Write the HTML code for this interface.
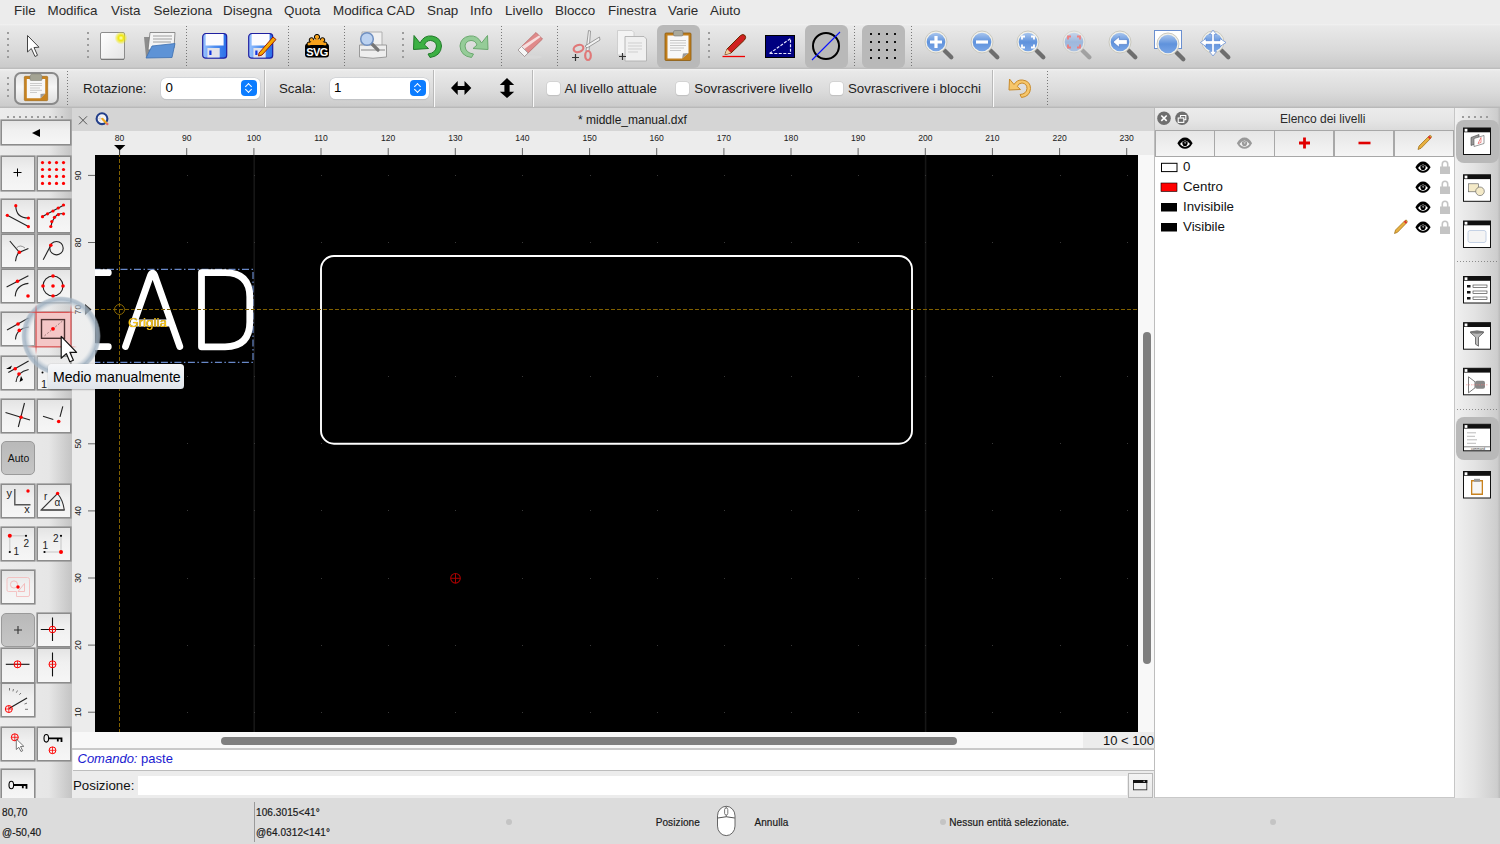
<!DOCTYPE html>
<html><head><meta charset="utf-8">
<style>
*{margin:0;padding:0;box-sizing:border-box}
html,body{width:1500px;height:844px;overflow:hidden;background:#ececec;font-family:"Liberation Sans",sans-serif;color:#1e1e1e}
.a{position:absolute}
#menubar{left:0;top:0;width:1500px;height:24px;background:#ececec}
#menubar span{position:absolute;top:3px;font-size:13.4px;color:#2b2b2b;white-space:nowrap}
#tb1{left:0;top:24px;width:1500px;height:45px;background:linear-gradient(#f2f2f2 0,#e9e9e9 2px,#d9d9d9 60%,#cbcbcb 95%,#b9b9b9 100%)}
#tb2{left:0;top:69px;width:1500px;height:39px;background:linear-gradient(#f2f2f2 0,#e9e9e9 2px,#dadada 60%,#cccccc 94%,#b4b4b4 100%)}
.dsep{position:absolute;width:1px;background-image:linear-gradient(#555 50%,transparent 50%);background-size:1px 3px;opacity:.75}
.hdl{position:absolute;width:2px;background-image:linear-gradient(#9c9c9c 2px,transparent 2px);background-size:2px 6px}
.vsep{position:absolute;width:1px;background:#fafafa;border-left:1px solid #b9b9b9;width:2px}
#leftbox{left:0;top:108px;width:72px;height:690px;background:linear-gradient(90deg,#ececec 0,#e6e6e6 68%,#cbcbcb 93%,#c4c4c4 100%)}
.btn svg{position:absolute;left:0;top:0}
#tabhdr{left:72px;top:108px;width:1083px;height:23px;background:#d5d5d5}
#ruler{left:72px;top:131px;width:1083px;height:24px;background:#ececec}
#vruler{left:72px;top:155px;width:23px;height:577px;background:#ececec}
#canvas{left:95px;top:155px;width:1043px;height:577px;background:#000;overflow:hidden}
#vscroll{left:1138px;top:155px;width:17px;height:593px;background:#f8f8f8}
#hscroll{left:72px;top:732px;width:1066px;height:16px;background:#f8f8f8}
#cmd{left:72px;top:748px;width:1083px;height:50px;background:#ececec}
#status{left:0;top:798px;width:1500px;height:46px;background:#dcdcdc}
#status span{position:absolute;font-size:10px;color:#222;white-space:nowrap;letter-spacing:.1px}
#layer{left:1155px;top:108px;width:299px;height:690px;background:#fff;border-bottom:1px solid #c9c9c9}
#rdock{left:1454px;top:108px;width:46px;height:690px;background:linear-gradient(90deg,#c6c6c6 0,#c6c6c6 1px,#f0f0f0 1px,#e3e3e3 45%,#cdcdcd 94%,#bababa 100%)}
.tl{font-size:13.3px;color:#1e1e1e;white-space:nowrap}
.spin{position:absolute;top:77.5px;width:98.5px;height:21px;background:#fff;border-radius:5.5px;box-shadow:0 0 0 .6px #c6cad0,0 .5px 1px rgba(0,0,0,.12)}
.spin span{position:absolute;left:4.5px;top:2.5px;font-size:13.3px;color:#000}
.spin i{position:absolute;right:2.3px;top:2.5px;width:16px;height:16px;border-radius:4px;background:#0b7cff}
.spin i:before,.spin i:after{content:"";position:absolute;left:5px;width:4px;height:4px;border:solid #fff;border-width:1.3px 0 0 1.3px}
.spin i:before{top:4px;transform:rotate(45deg)}
.spin i:after{top:7px;transform:rotate(225deg)}
.chk{position:absolute;top:81.5px;width:13px;height:13px;background:#fff;border-radius:3px;box-shadow:0 0 0 .5px #c9c9c9,0 .5px 1px rgba(0,0,0,.15)}
.btn{position:absolute;background:linear-gradient(#e4e4e4,#f0f0f0 40%,#f6f6f6);border:1px solid #8c8c8c;box-shadow:0 0 0 .6px #8c8c8c}
.btnp{position:absolute;background:linear-gradient(#b9b9b9,#c6c6c6);border:1px solid #9a9a9a}
.hdl2{position:absolute;background-image:linear-gradient(90deg,#9c9c9c 2px,transparent 2px);background-size:6px 2px}
#status span,.st{position:absolute;font-size:10px;color:#1a1a1a;white-space:nowrap;letter-spacing:.1px;-webkit-text-stroke:.2px #1a1a1a}
.lb{position:absolute;top:131px;height:24.5px;background:linear-gradient(#e6e6e6,#f5f5f5)}
.ln{position:absolute;left:1183px;font-size:13.3px;color:#111;white-space:nowrap}
.dsep2{position:absolute;height:1px;background-image:linear-gradient(90deg,#666 50%,transparent 50%);background-size:3px 1px;opacity:.7}
</style></head><body>
<div id="menubar" class="a">
<span style="left:14px">File</span>
<span style="left:47.5px">Modifica</span>
<span style="left:111px">Vista</span>
<span style="left:153.5px">Seleziona</span>
<span style="left:223px">Disegna</span>
<span style="left:284px">Quota</span>
<span style="left:333px">Modifica CAD</span>
<span style="left:427px">Snap</span>
<span style="left:470px">Info</span>
<span style="left:505px">Livello</span>
<span style="left:555px">Blocco</span>
<span style="left:608px">Finestra</span>
<span style="left:668px">Varie</span>
<span style="left:710px">Aiuto</span>
</div>
<div id="tb1" class="a"></div>
<div id="tb2" class="a"></div>
<!-- toolbar1 -->
<div class="hdl" style="left:7px;top:32px;height:26px"></div>
<div class="hdl" style="left:87px;top:32px;height:26px"></div>
<div class="hdl" style="left:402px;top:32px;height:26px"></div>
<div class="hdl" style="left:708px;top:32px;height:26px"></div>
<div class="dsep" style="left:186px;top:26px;height:41px"></div>
<div class="dsep" style="left:288px;top:26px;height:41px"></div>
<div class="dsep" style="left:344px;top:26px;height:41px"></div>
<div class="dsep" style="left:501px;top:26px;height:41px"></div>
<div class="dsep" style="left:557px;top:26px;height:41px"></div>
<div class="dsep" style="left:854px;top:26px;height:41px"></div>
<div class="dsep" style="left:911px;top:26px;height:41px"></div>
<div class="a" style="left:657px;top:25px;width:43px;height:43px;background:#b9b9b9;border-radius:6px"></div>
<div class="a" style="left:805px;top:25px;width:43px;height:43px;background:#b9b9b9;border-radius:6px"></div>
<div class="a" style="left:862px;top:25px;width:43px;height:43px;background:#b9b9b9;border-radius:6px"></div>
<svg class="a" style="left:0;top:24px" width="1500" height="45" viewBox="0 24 1500 45">
<defs>
<linearGradient id="gpage" x1="0" y1="0" x2="1" y2="1"><stop offset="0" stop-color="#ffffff"/><stop offset="1" stop-color="#e4e4e4"/></linearGradient>
<linearGradient id="gblue" x1="0" y1="0" x2="1" y2="0"><stop offset="0" stop-color="#9ac4ff"/><stop offset=".5" stop-color="#4f8ef0"/><stop offset="1" stop-color="#2a6ee8"/></linearGradient>
<radialGradient id="gglow"><stop offset="0" stop-color="#ffffc0"/><stop offset=".4" stop-color="#f0e810"/><stop offset="1" stop-color="#f0e810" stop-opacity="0"/></radialGradient>
<linearGradient id="glens" x1="0" y1="0" x2="0" y2="1"><stop offset="0" stop-color="#a9c6ee"/><stop offset=".5" stop-color="#5f92dc"/><stop offset="1" stop-color="#7aa6e6"/></linearGradient>
<g id="lens">
<path d="M8.5 8.5 L15.3 15.3" stroke="#6e6e6e" stroke-width="4.3" stroke-linecap="round"/>
<circle cx="0" cy="0" r="11" fill="#f2f1ea" stroke="#c9c8bf" stroke-width="1"/>
<circle cx="0" cy="0" r="9.3" fill="url(#glens)"/>
</g>
</defs>
<!-- pointer -->
<path d="M27.5 35.5 L27.5 52 L31.3 48.5 L35 56.5 L37.5 55.3 L34 47.5 L39 47.2 Z" fill="#fff" stroke="#444" stroke-width="1" stroke-linejoin="round"/>
<!-- new doc -->
<rect x="100.5" y="32.5" width="24" height="27" rx="1.5" fill="url(#gpage)" stroke="#8c8c8c"/>
<line x1="101" y1="59.3" x2="124" y2="59.3" stroke="#777" stroke-width="1.2"/>
<circle cx="121" cy="38" r="6.5" fill="url(#gglow)"/>
<!-- open folder -->
<path d="M144 37 L152 37 L151 56 L146 57 Z" fill="#8c8c8c"/>
<path d="M150 32.5 L175 32.5 L174 48 L148 50 Z" fill="#f4f4f4" stroke="#777" stroke-width=".8"/>
<path d="M153 36 L172 36 M153 39 L172 39 M153 42 L171 42" stroke="#bbb" stroke-width="1.5"/>
<path d="M152 46 L175 43.5 L172 57.5 L146 58 Z" fill="#5e93d6" stroke="#3c6fb0" stroke-width=".8"/>
<!-- save -->
<g transform="translate(202,33)">
<rect x=".7" y=".7" width="24" height="24.5" rx="3" fill="url(#gblue)" stroke="#1e1ea0" stroke-width="1.2"/>
<rect x="3.6" y="1" width="18" height="11.5" fill="#fbfbff"/>
<rect x="5.4" y="15" width="12.3" height="9.5" fill="#e2e2ea"/>
<rect x="7.3" y="17.5" width="2.2" height="4.5" fill="#1034e0"/>
</g>
<!-- save as -->
<g transform="translate(248,33)">
<rect x=".7" y=".7" width="24" height="24.5" rx="3" fill="url(#gblue)" stroke="#1e1ea0" stroke-width="1.2"/>
<rect x="3.6" y="1" width="18" height="11.5" fill="#fbfbff"/>
<rect x="5.4" y="15" width="12.3" height="9.5" fill="#e2e2ea"/>
<rect x="7.3" y="17.5" width="2.2" height="4.5" fill="#1034e0"/>
<path d="M11 20 L25 4 L28 6.5 L14 22 L10.5 23 Z" fill="#f7a800" stroke="#a02000" stroke-width="1"/>
</g>
<!-- svg logo -->
<rect x="305" y="43.5" width="24" height="14" rx="3" fill="#000"/>
<g fill="#f7a21b" stroke="#000" stroke-width="1">
<circle cx="317" cy="37" r="2.6"/><circle cx="311.5" cy="40" r="2.3"/><circle cx="322.5" cy="40" r="2.3"/><circle cx="309" cy="44" r="2"/><circle cx="325" cy="44" r="2"/>
</g>
<path d="M308 45 Q317 33 326 45 Z" fill="#f7a21b"/>
<text x="317" y="55.5" font-family="Liberation Sans" font-weight="bold" font-size="11" fill="#fff" text-anchor="middle" letter-spacing="-.5">SVG</text>
<!-- print preview -->
<path d="M362 32 L382 32 L382 47 L362 47 Z" fill="#f0f0f0" stroke="#b0b0b0"/>
<path d="M359.5 45 L386.5 45 L386.5 57 Q373 59.5 359.5 57 Z" fill="#eeeeee" stroke="#9a9a9a"/>
<path d="M361 50 L385 50" stroke="#888" stroke-width="1"/>
<path d="M370 42 L378 50" stroke="#777" stroke-width="3.2" stroke-linecap="round"/>
<circle cx="367" cy="39" r="6.3" fill="#bcd2f0" stroke="#6f8fc0" stroke-width="1.5"/>
<!-- undo -->
<path d="M420 43 Q424 35 432 36 Q441 37.5 441.5 46 Q441 56 430 57.5 L428 54 Q436 53 436.5 46 Q436 41 430.5 40.5 Q426 40.5 424.5 45 L428.5 48.5 L413.5 49.5 L414 35.5 Z" fill="#3cb043" stroke="#1f7a28" stroke-width="1"/>
<!-- redo -->
<path d="M481.5 43 Q477.5 35 469.5 36 Q460.5 37.5 460 46 Q460.5 56 471.5 57.5 L473.5 54 Q465.5 53 465 46 Q465.5 41 471 40.5 Q475.5 40.5 477 45 L473 48.5 L488 49.5 L487.5 35.5 Z" fill="#95cc98" stroke="#6aa86e" stroke-width="1"/>
<!-- eraser -->
<ellipse cx="531" cy="57" rx="11" ry="1.8" fill="#d8d8d8"/>
<path d="M518 50 L536 32.5 L542.5 39 L524.5 56.5 Z" fill="#e08a8a" stroke="#b86a6a" stroke-width=".8"/>
<path d="M521 47 L539 35.5 L540.5 37 L523 50 Z" fill="#f6dede"/>
<path d="M518 50 L521.5 46.5 L528 53 L524.5 56.5 Z" fill="#f6f6f6" stroke="#999" stroke-width=".8"/>
<!-- scissors -->
<path d="M588.5 30.5 L586 51 L589 51 L590.5 31 Z" fill="#f2f2f2" stroke="#888" stroke-width=".8"/>
<path d="M599.5 37 L585 46 L587 48 L600 40 Z" fill="#f2f2f2" stroke="#888" stroke-width=".8"/>
<ellipse cx="578.5" cy="48.5" rx="5" ry="3.5" fill="none" stroke="#e07878" stroke-width="2.2" transform="rotate(-20 578.5 48.5)"/>
<ellipse cx="588" cy="55.5" rx="2.8" ry="4.5" fill="none" stroke="#e07878" stroke-width="2.2"/>
<path d="M572 57.5 h7 M575.5 54 v7" stroke="#333" stroke-width="1.2"/>
<!-- copy -->
<path d="M617.5 30.5 L632 30.5 L634 32.5 L634 55 L617.5 55 Z" fill="#f4f4f4" stroke="#c8c8c8" stroke-width=".8"/>
<path d="M625 36.5 L644 36.5 L646.5 39 L646.5 61 L625 61 Z" fill="#f0f0f0" stroke="#b0b0b0" stroke-width=".9"/>
<path d="M628 43 h14 M628 46 h14 M628 49 h14 M628 52 h10" stroke="#cfcfcf" stroke-width="1"/>
<path d="M619 56.5 h7 M622.5 53 v7" stroke="#333" stroke-width="1.2"/>
<!-- paste -->
<rect x="665" y="33" width="26" height="27.5" rx="1" fill="#c27f1c" stroke="#8a5a10" stroke-width=".8"/>
<path d="M667.5 35.5 L688.5 35.5 L688.5 53 L682 58.5 L667.5 58.5 Z" fill="#f8f8f8"/>
<path d="M682 58.5 L688.5 53 L683 53.5 Z" fill="#999"/>
<path d="M670 40.5 h16 M670 43 h16 M670 45.5 h16 M670 48 h14 M670 50.5 h11" stroke="#c8c8c8" stroke-width="1"/>
<rect x="673.5" y="30.5" width="9.5" height="5.5" rx="1.5" fill="#a9a99c" stroke="#777" stroke-width=".6"/>
<!-- pencil -->
<line x1="722.5" y1="56.5" x2="745" y2="56.5" stroke="#f00000" stroke-width="1.3"/>
<path d="M725 54.5 L727 49 L740.5 35.5 Q743 33.5 745 35.5 Q746.5 37.5 744.5 40 L731 53 Z" fill="#d02020" stroke="#6a2a00" stroke-width="1"/>
<path d="M725 54.5 L727 49 L731 53 Z" fill="#f0d0a0"/>
<!-- blue rect -->
<rect x="765.5" y="35.5" width="29" height="22" fill="#000080" stroke="#000" stroke-width="1"/>
<path d="M769.5 53.5 L790.5 38.5 L790.5 53.5 Z" fill="none" stroke="#e8e8ff" stroke-width="1.2" stroke-dasharray="3 1.5"/>
<!-- circle -->
<circle cx="826" cy="46" r="13" fill="none" stroke="#000" stroke-width="2"/>
<line x1="812" y1="60" x2="840" y2="32" stroke="#0a10ff" stroke-width="1.1"/>
<!-- grid -->
<g fill="#111">
<rect x="870" y="33" width="2" height="2"/><rect x="878" y="33" width="2" height="2"/><rect x="886" y="33" width="2" height="2"/><rect x="894" y="33" width="2" height="2"/>
<rect x="870" y="41" width="2" height="2"/><rect x="878" y="41" width="2" height="2"/><rect x="886" y="41" width="2" height="2"/><rect x="894" y="41" width="2" height="2"/>
<rect x="870" y="49" width="2" height="2"/><rect x="878" y="49" width="2" height="2"/><rect x="886" y="49" width="2" height="2"/><rect x="894" y="49" width="2" height="2"/>
<rect x="870" y="57" width="2" height="2"/><rect x="878" y="57" width="2" height="2"/><rect x="886" y="57" width="2" height="2"/><rect x="894" y="57" width="2" height="2"/>
</g>
<!-- zoom icons -->
<use href="#lens" x="936" y="42"/>
<path d="M936 36 v12 M930 42 h12" stroke="#fff" stroke-width="3.2"/>
<use href="#lens" x="982" y="42"/>
<path d="M976 42 h12" stroke="#fff" stroke-width="3.2"/>
<use href="#lens" x="1028" y="42"/>
<path d="M1022 39.5 v-3 h3 M1031 36.5 h3 v3 M1034 44.5 v3 h-3 M1025 47.5 h-3 v-3" stroke="#fff" stroke-width="1.8" fill="none"/>
<g opacity=".5"><use href="#lens" x="1074" y="42"/>
<path d="M1068 39.5 v-3 h3 M1077 36.5 h3 v3 M1080 44.5 v3 h-3 M1071 47.5 h-3 v-3" stroke="#ff2020" stroke-width="1.8" fill="none"/></g>
<use href="#lens" x="1120" y="42"/>
<path d="M1113 42 L1119.3 36.6 V39.6 H1127.3 V44.4 H1119.3 V47.4 Z" fill="#fff" stroke="#3c6cc0" stroke-width=".6"/>
<rect x="1154.5" y="30.5" width="27" height="18" fill="#fff" stroke="#6a8fd0"/>
<use href="#lens" x="1168" y="44"/>
<use href="#lens" x="1213" y="42"/>
<path d="M1213 30.2 L1216.5 34.5 H1214.3 V40.7 H1220 V38.5 L1226 42.5 L1220 46.5 V44.3 H1214.3 V51.5 H1216.5 L1213 56 L1209.5 51.5 H1211.7 V44.3 H1206 V46.5 L1200.4 42.5 L1206 38.5 V40.7 H1211.7 V34.5 H1209.5 Z" fill="#fff" stroke="#4a7ad0" stroke-width=".6"/>
</svg>


<!-- toolbar2 -->
<div class="hdl" style="left:7px;top:77px;height:21px"></div>
<div class="a" style="left:14px;top:72px;width:45px;height:33px;border:2px solid #8a8a8a;border-radius:7px;background:linear-gradient(#e4e4e4,#f6f6f6 45%,#ececec 70%,#dedede)"></div>
<div class="dsep" style="left:67px;top:71px;height:34px"></div>
<span class="a tl" style="left:83px;top:81px">Rotazione:</span>
<div class="spin" style="left:161px"><span>0</span><i></i></div>
<div class="vsep" style="left:264px;top:70px;height:37px"></div>
<span class="a tl" style="left:279px;top:81px">Scala:</span>
<div class="spin" style="left:329.5px;width:99px"><span>1</span><i></i></div>
<div class="vsep" style="left:433px;top:70px;height:37px"></div>
<div class="vsep" style="left:532px;top:70px;height:37px"></div>
<div class="chk" style="left:546.5px"></div><span class="a tl" style="left:564.6px;top:81px">Al livello attuale</span>
<div class="chk" style="left:676px"></div><span class="a tl" style="left:694.3px;top:81px">Sovrascrivere livello</span>
<div class="chk" style="left:829.6px"></div><span class="a tl" style="left:848px;top:81px">Sovrascrivere i blocchi</span>
<div class="vsep" style="left:992px;top:70px;height:37px"></div>
<div class="dsep" style="left:1047px;top:71px;height:34px"></div>
<svg class="a" style="left:0;top:69px" width="1100" height="39" viewBox="0 69 1100 39">
<!-- paste icon -->
<rect x="24.3" y="76.3" width="23.4" height="24.4" rx="1" fill="#c8821e" stroke="#9a6414" stroke-width=".6"/>
<path d="M26.8 79 L45.2 79 L45.2 93.5 L40.5 98.3 L26.8 98.3 Z" fill="#f7f7f7"/>
<path d="M40.5 98.3 L45.2 93.5 L40.5 94 Z" fill="#999"/>
<path d="M30 83.5 h12 M30 85.5 h12 M30 88 h10 M30 90.3 h12 M30 92.5 h7" stroke="#c5c5c5" stroke-width=".9"/>
<path d="M31.5 73.8 L40.5 73.8 L42 76 L42 79.5 Q42 80.5 41 80.5 L31 80.5 Q30 80.5 30 79.5 L30 76 Z" fill="#a4a494" stroke="#7a7a70" stroke-width=".5"/>
<!-- h arrow -->
<path d="M451 88 L457.7 81 L457.7 85.9 L464.5 85.9 L464.5 81 L471.3 88 L464.5 95 L464.5 90.1 L457.7 90.1 L457.7 95 Z" fill="#000"/>
<!-- v arrow -->
<path d="M507 78 L514.2 85 L509.6 85 L509.6 91.7 L514.2 91.7 L507 98 L499.8 91.7 L504.4 91.7 L504.4 85 L499.8 85 Z" fill="#000"/>
<!-- orange undo -->
<path d="M1014 84.5 Q1017 79.5 1022.5 80 Q1030.5 81 1030.5 88.5 Q1030 96.5 1021.5 97.5 L1020 94.5 Q1026.5 94 1027 88.5 Q1027 83.5 1022 83 Q1018.5 83 1017.3 86.5 L1020.5 89.5 L1009 90 L1009.5 79 Z" fill="#f6c66a" stroke="#c88a2a" stroke-width="1"/>
</svg>
<div id="leftbox" class="a"></div>
<!--LEFT--><div class="hdl2" style="left:7px;top:116px;width:57px;height:2px"></div>
<div class="btn" style="left:1.3px;top:120.2px;width:69.3px;height:25.2px"></div>
<div class="btn" style="left:1.3px;top:156.4px;width:34.2px;height:34.2px"></div>
<div class="btn" style="left:36.5px;top:156.4px;width:34.2px;height:34.2px"></div>
<div class="btn" style="left:1.3px;top:199.3px;width:34.2px;height:34.2px"></div>
<div class="btn" style="left:36.5px;top:199.3px;width:34.2px;height:34.2px"></div>
<div class="btn" style="left:1.3px;top:234.3px;width:34.2px;height:34.2px"></div>
<div class="btn" style="left:36.5px;top:234.3px;width:34.2px;height:34.2px"></div>
<div class="btn" style="left:1.3px;top:269.0px;width:34.2px;height:34.2px"></div>
<div class="btn" style="left:36.5px;top:269.0px;width:34.2px;height:34.2px"></div>
<div class="btn" style="left:1.3px;top:312.3px;width:34.2px;height:34.2px"></div>
<div class="btn" style="left:36.5px;top:312.3px;width:34.2px;height:34.2px"></div>
<div class="btn" style="left:1.3px;top:355.7px;width:34.2px;height:34.2px"></div>
<div class="btn" style="left:36.5px;top:355.7px;width:34.2px;height:34.2px"></div>
<div class="btn" style="left:1.3px;top:398.5px;width:34.2px;height:34.2px"></div>
<div class="btn" style="left:36.5px;top:398.5px;width:34.2px;height:34.2px"></div>
<div class="btnp" style="left:1.3px;top:441.3px;width:34.2px;height:34.2px;border-radius:5px"></div>
<div class="btn" style="left:1.3px;top:484.2px;width:34.2px;height:34.2px"></div>
<div class="btn" style="left:36.5px;top:484.2px;width:34.2px;height:34.2px"></div>
<div class="btn" style="left:1.3px;top:527.3px;width:34.2px;height:34.2px"></div>
<div class="btn" style="left:36.5px;top:527.3px;width:34.2px;height:34.2px"></div>
<div class="btn" style="left:1.3px;top:570.2px;width:34.2px;height:34.2px"></div>
<div class="btnp" style="left:1.3px;top:613.3px;width:34.2px;height:34.2px;border-radius:5px"></div>
<div class="btn" style="left:36.5px;top:613.3px;width:34.2px;height:34.2px"></div>
<div class="btn" style="left:1.3px;top:648.4px;width:34.2px;height:34.2px"></div>
<div class="btn" style="left:36.5px;top:648.4px;width:34.2px;height:34.2px"></div>
<div class="btn" style="left:1.3px;top:682.6px;width:34.2px;height:34.2px"></div>
<div class="btn" style="left:1.3px;top:726.5px;width:34.2px;height:34.2px"></div>
<div class="btn" style="left:36.5px;top:726.5px;width:34.2px;height:34.2px"></div>
<div class="btn" style="left:1.3px;top:769.3px;width:34.2px;height:30px"></div>
<svg class="a" style="left:0;top:0" width="72" height="800"><path d="M32 133 L40 129 L40 137 Z" transform="translate(0,0)" fill="#000"/><path d="M13.5 172.5 h8 M17.5 168.5 v8" stroke="#000" stroke-width="1"/><circle cx="42.5" cy="162.6" r="1.6" fill="#ff0000"/><circle cx="42.5" cy="169.5" r="1.6" fill="#ff0000"/><circle cx="42.5" cy="176.4" r="1.6" fill="#ff0000"/><circle cx="42.5" cy="183.4" r="1.6" fill="#ff0000"/><circle cx="49.5" cy="162.6" r="1.6" fill="#ff0000"/><circle cx="49.5" cy="169.5" r="1.6" fill="#ff0000"/><circle cx="49.5" cy="176.4" r="1.6" fill="#ff0000"/><circle cx="49.5" cy="183.4" r="1.6" fill="#ff0000"/><circle cx="56.5" cy="162.6" r="1.6" fill="#ff0000"/><circle cx="56.5" cy="169.5" r="1.6" fill="#ff0000"/><circle cx="56.5" cy="176.4" r="1.6" fill="#ff0000"/><circle cx="56.5" cy="183.4" r="1.6" fill="#ff0000"/><circle cx="63.5" cy="162.6" r="1.6" fill="#ff0000"/><circle cx="63.5" cy="169.5" r="1.6" fill="#ff0000"/><circle cx="63.5" cy="176.4" r="1.6" fill="#ff0000"/><circle cx="63.5" cy="183.4" r="1.6" fill="#ff0000"/><path d="M7.3 215.3 L28.4 226.6" stroke="#222" stroke-width="1.1"/><path d="M15.8 205.7 Q16 218 28.4 218" stroke="#222" stroke-width="1.1" fill="none"/><circle cx="7.3" cy="215.3" r="1.6" fill="#ff0000"/><circle cx="15.8" cy="205.7" r="1.6" fill="#ff0000"/><circle cx="28.4" cy="218" r="1.6" fill="#ff0000"/><circle cx="28.4" cy="226.6" r="1.6" fill="#ff0000"/><path d="M42.5 216.5 L64 205 M51 226.5 Q52 219 58 214 L64 213.5" stroke="#222" stroke-width="1.1" fill="none"/><circle cx="42.5" cy="216.7" r="1.6" fill="#ff0000"/><circle cx="47.5" cy="213.8" r="1.6" fill="#ff0000"/><circle cx="53" cy="211" r="1.6" fill="#ff0000"/><circle cx="58.2" cy="208" r="1.6" fill="#ff0000"/><circle cx="63.5" cy="205" r="1.6" fill="#ff0000"/><circle cx="50.8" cy="226.5" r="1.6" fill="#ff0000"/><circle cx="51.8" cy="221.5" r="1.6" fill="#ff0000"/><circle cx="54.5" cy="217.3" r="1.6" fill="#ff0000"/><circle cx="58.4" cy="214.6" r="1.6" fill="#ff0000"/><circle cx="63.5" cy="213.8" r="1.6" fill="#ff0000"/><path d="M9.8 241 L19.4 252.3 L28.4 248.5 M15.5 261.3 Q16 255 19.4 252.3" stroke="#222" stroke-width="1.1" fill="none"/><path d="M16.5 248 Q20 244 25 248" stroke="#555" stroke-width=".6" fill="none"/><circle cx="19.4" cy="252.3" r="1.8" fill="#f00"/><circle cx="56.5" cy="248.2" r="6.7" stroke="#222" stroke-width="1.1" fill="none"/><path d="M43.2 259.8 L50.8 245.3" stroke="#222" stroke-width="1.1"/><circle cx="50.8" cy="245.3" r="1.8" fill="#f00"/><path d="M6.6 286.9 L28.4 275.8 M15.2 296.4 Q16 285 28.4 283.4" stroke="#222" stroke-width="1.1" fill="none"/><circle cx="17.5" cy="281.3" r="1.8" fill="#f00"/><circle cx="28" cy="296" r="1.8" fill="#f00"/><circle cx="53" cy="286" r="10" stroke="#222" stroke-width="1.1" fill="none"/><circle cx="53" cy="286" r="1.8" fill="#ff0000"/><circle cx="53" cy="276" r="1.8" fill="#ff0000"/><circle cx="53" cy="296" r="1.8" fill="#ff0000"/><circle cx="43" cy="286" r="1.8" fill="#ff0000"/><circle cx="63" cy="286" r="1.8" fill="#ff0000"/><path d="M7 330 L28.6 318 M15.5 339.5 Q16 329 28.7 327" stroke="#222" stroke-width="1.1" fill="none"/><circle cx="18" cy="324" r="1.8" fill="#f00"/><circle cx="19.3" cy="330.4" r="1.8" fill="#f00"/><path d="M8.3 372.5 L28.6 361 M16 382 Q17 372 28.6 369.5" stroke="#222" stroke-width="1.1" fill="none"/><path d="M6 369 L12 365.5 L10.5 369 Z M19.5 382 L21 376 L23 380 Z" fill="#000"/><circle cx="15.2" cy="368.8" r="1.8" fill="#f00"/><circle cx="19" cy="374" r="1.8" fill="#f00"/><text x="41" y="388" font-family="Liberation Sans" font-size="11" fill="#222">1</text><circle cx="42.5" cy="372.5" r="1" fill="#000"/><path d="M5.5 412.5 L30 420 M24.5 403 L18.3 427" stroke="#222" stroke-width="1.1"/><circle cx="21" cy="417.2" r="1.8" fill="#f00"/><path d="M43 416.3 L53.3 419.5 M60 416.9 L62.8 406.4" stroke="#222" stroke-width="1.1"/><circle cx="58.7" cy="421.5" r="1.8" fill="#f00"/><text x="18.5" y="462" font-family="Liberation Sans" font-size="10.4" fill="#111" text-anchor="middle">Auto</text><text x="6.6" y="497" font-family="Liberation Sans" font-size="11" fill="#222">y</text><path d="M14.8 489 V504.7 H30.5" stroke="#555" stroke-width="1.4" fill="none"/><text x="24.3" y="513.3" font-family="Liberation Sans" font-size="11" fill="#222">x</text><circle cx="28" cy="491" r="1.7" fill="#f00"/><text x="44" y="500" font-family="Liberation Sans" font-size="10" fill="#222">r</text><path d="M41.2 510 L57.5 493.5 Q63 500 64.3 510 Z" stroke="#333" stroke-width="1.1" fill="none"/><path d="M41.2 510 H64.3" stroke="#555" stroke-width="1.5"/><text x="54.5" y="506" font-family="Liberation Sans" font-size="10" fill="#222">α</text><circle cx="57.6" cy="493.4" r="1.7" fill="#f00"/><path d="M9.8 535.8 H26 M9.8 535.8 V552" stroke="#bbb" stroke-width=".8"/><circle cx="26" cy="535.8" r="1.1" fill="#000"/><circle cx="9.8" cy="552" r="1.1" fill="#000"/><circle cx="9.8" cy="535.8" r="2" fill="#f00"/><text x="23.5" y="546.5" font-family="Liberation Sans" font-size="10" fill="#222">2</text><text x="13.5" y="554.5" font-family="Liberation Sans" font-size="10" fill="#222">1</text><path d="M44.5 552 H61 M61 535.8 V552" stroke="#bbb" stroke-width=".8"/><circle cx="61" cy="535.8" r="1.1" fill="#000"/><circle cx="44.5" cy="552" r="1.1" fill="#000"/><circle cx="61" cy="552" r="2" fill="#f00"/><text x="53" y="541.5" font-family="Liberation Sans" font-size="10" fill="#222">2</text><text x="42.5" y="548.5" font-family="Liberation Sans" font-size="10" fill="#222">1</text><path d="M9 577.5 H27.5 Q29.5 577.5 29.5 579.5 V595 Q29.5 596.5 28 596.5 H16.5 V591.5 H8.5 Q7 591.5 7 590 V579.5 Q7 577.5 9 577.5 Z" stroke="#f4b8b8" stroke-width=".8" fill="none"/><circle cx="14" cy="584.5" r="3.6" stroke="#f4b0b0" stroke-width=".8" fill="none"/><path d="M18 591.5 L24.5 583.5 V591.5 Z" stroke="#f4b0b0" stroke-width=".8" fill="none"/><circle cx="18" cy="587" r="1.7" fill="#f00"/><path d="M14 630 h8 M18 626 v8" stroke="#333" stroke-width="1.1"/><path d="M52.5 617.5 V641 M40.8 629.5 H64.3" stroke="#111" stroke-width="1.1"/><circle cx="52.5" cy="629.5" r="3.3" stroke="#f00" stroke-width="1" fill="none"/><path d="M49.2 629.5 h6.6 M52.5 626.2 v6.6" stroke="#f00" stroke-width=".8"/><path d="M5.8 664.3 H29.5" stroke="#111" stroke-width="1.1"/><circle cx="17.5" cy="664.3" r="3.5" stroke="#f00" stroke-width="1" fill="none"/><path d="M14.0 664.3 h7.0 M17.5 660.8 v7.0" stroke="#f00" stroke-width=".8"/><path d="M52.5 652.5 V676.4" stroke="#111" stroke-width="1.1"/><circle cx="52.5" cy="664.3" r="3.5" stroke="#f00" stroke-width="1" fill="none"/><path d="M49.0 664.3 h7.0 M52.5 660.8 v7.0" stroke="#f00" stroke-width=".8"/><path d="M9 708.5 L27 698" stroke="#222" stroke-width="1.2"/><g stroke="#777" stroke-width="1"><path d="M9.5 688 v2.5 M13.5 689 l-.6 2.4 M17.5 690.5 l-1.2 2.2 M21 693 l-1.7 1.8 M24.5 704 l2.5 -.9 M25 709.3 h3"/></g><circle cx="8.8" cy="709" r="3.5" stroke="#f00" stroke-width="1" fill="none"/><path d="M5.300000000000001 709 h7.0 M8.8 705.5 v7.0" stroke="#f00" stroke-width=".8"/><circle cx="14.8" cy="737.3" r="3.5" stroke="#f00" stroke-width="1" fill="none"/><path d="M11.3 737.3 h7.0 M14.8 733.8 v7.0" stroke="#f00" stroke-width=".8"/><path d="M16.3 739 L16.3 749.5 L18.8 747.3 L21 751.5 L22.7 750.7 L20.5 746.5 L23.8 746.3 Z" fill="#fff" stroke="#555" stroke-width=".8"/><ellipse cx="46.3" cy="738.3" rx="2.3" ry="3.8" stroke="#000" stroke-width="1.1" fill="none"/><path d="M48.6 738.3 H61.5 V742 M57.8 738.3 V741.5" stroke="#000" stroke-width="1.8" fill="none"/><circle cx="52.5" cy="750.3" r="3.4" stroke="#f00" stroke-width="1" fill="none"/><path d="M49.1 750.3 h6.8 M52.5 746.9 v6.8" stroke="#f00" stroke-width=".8"/><ellipse cx="11.3" cy="785" rx="2.3" ry="3.8" stroke="#000" stroke-width="1.1" fill="none"/><path d="M13.6 785 H26.5 V788.7 M22.8 785 V788.3" stroke="#000" stroke-width="1.8" fill="none"/></svg>
<!--/LEFT-->

<div id="tabhdr" class="a"></div>
<div id="ruler" class="a"></div>
<div id="vruler" class="a"></div>
<div id="canvas" class="a"></div>
<div id="vscroll" class="a"></div>
<div id="hscroll" class="a"></div>
<!--CANVAS--><svg class="a" style="left:0;top:0" width="1160" height="800"><text x="119.6" y="140.8" font-family="Liberation Sans" font-size="8.6" fill="#222" text-anchor="middle">80</text><text x="186.7" y="140.8" font-family="Liberation Sans" font-size="8.6" fill="#222" text-anchor="middle">90</text><rect x="186.2" y="148" width="1" height="7" fill="#666"/><text x="253.9" y="140.8" font-family="Liberation Sans" font-size="8.6" fill="#222" text-anchor="middle">100</text><rect x="253.4" y="148" width="1" height="7" fill="#666"/><text x="321.0" y="140.8" font-family="Liberation Sans" font-size="8.6" fill="#222" text-anchor="middle">110</text><rect x="320.5" y="148" width="1" height="7" fill="#666"/><text x="388.2" y="140.8" font-family="Liberation Sans" font-size="8.6" fill="#222" text-anchor="middle">120</text><rect x="387.7" y="148" width="1" height="7" fill="#666"/><text x="455.3" y="140.8" font-family="Liberation Sans" font-size="8.6" fill="#222" text-anchor="middle">130</text><rect x="454.8" y="148" width="1" height="7" fill="#666"/><text x="522.4" y="140.8" font-family="Liberation Sans" font-size="8.6" fill="#222" text-anchor="middle">140</text><rect x="521.9" y="148" width="1" height="7" fill="#666"/><text x="589.6" y="140.8" font-family="Liberation Sans" font-size="8.6" fill="#222" text-anchor="middle">150</text><rect x="589.1" y="148" width="1" height="7" fill="#666"/><text x="656.7" y="140.8" font-family="Liberation Sans" font-size="8.6" fill="#222" text-anchor="middle">160</text><rect x="656.2" y="148" width="1" height="7" fill="#666"/><text x="723.9" y="140.8" font-family="Liberation Sans" font-size="8.6" fill="#222" text-anchor="middle">170</text><rect x="723.4" y="148" width="1" height="7" fill="#666"/><text x="791.0" y="140.8" font-family="Liberation Sans" font-size="8.6" fill="#222" text-anchor="middle">180</text><rect x="790.5" y="148" width="1" height="7" fill="#666"/><text x="858.1" y="140.8" font-family="Liberation Sans" font-size="8.6" fill="#222" text-anchor="middle">190</text><rect x="857.6" y="148" width="1" height="7" fill="#666"/><text x="925.3" y="140.8" font-family="Liberation Sans" font-size="8.6" fill="#222" text-anchor="middle">200</text><rect x="924.8" y="148" width="1" height="7" fill="#666"/><text x="992.4" y="140.8" font-family="Liberation Sans" font-size="8.6" fill="#222" text-anchor="middle">210</text><rect x="991.9" y="148" width="1" height="7" fill="#666"/><text x="1059.6" y="140.8" font-family="Liberation Sans" font-size="8.6" fill="#222" text-anchor="middle">220</text><rect x="1059.1" y="148" width="1" height="7" fill="#666"/><text x="1126.7" y="140.8" font-family="Liberation Sans" font-size="8.6" fill="#222" text-anchor="middle">230</text><rect x="1126.2" y="148" width="1" height="7" fill="#666"/><path d="M114 145 L125.4 145 L119.7 150.5 Z" fill="#000"/><rect x="119.1" y="150" width="1" height="5" fill="#333"/><text transform="translate(81.2 712.2) rotate(-90)" x="0" y="0" font-family="Liberation Sans" font-size="8.6" fill="#222" text-anchor="middle">10</text><rect x="88" y="711.7" width="7" height="1" fill="#666"/><text transform="translate(81.2 645.1) rotate(-90)" x="0" y="0" font-family="Liberation Sans" font-size="8.6" fill="#222" text-anchor="middle">20</text><rect x="88" y="644.6" width="7" height="1" fill="#666"/><text transform="translate(81.2 578.0) rotate(-90)" x="0" y="0" font-family="Liberation Sans" font-size="8.6" fill="#222" text-anchor="middle">30</text><rect x="88" y="577.5" width="7" height="1" fill="#666"/><text transform="translate(81.2 510.9) rotate(-90)" x="0" y="0" font-family="Liberation Sans" font-size="8.6" fill="#222" text-anchor="middle">40</text><rect x="88" y="510.4" width="7" height="1" fill="#666"/><text transform="translate(81.2 443.8) rotate(-90)" x="0" y="0" font-family="Liberation Sans" font-size="8.6" fill="#222" text-anchor="middle">50</text><rect x="88" y="443.3" width="7" height="1" fill="#666"/><text transform="translate(81.2 376.7) rotate(-90)" x="0" y="0" font-family="Liberation Sans" font-size="8.6" fill="#222" text-anchor="middle">60</text><rect x="88" y="376.2" width="7" height="1" fill="#666"/><text transform="translate(81.2 309.6) rotate(-90)" x="0" y="0" font-family="Liberation Sans" font-size="8.6" fill="#222" text-anchor="middle">70</text><text transform="translate(81.2 242.5) rotate(-90)" x="0" y="0" font-family="Liberation Sans" font-size="8.6" fill="#222" text-anchor="middle">80</text><rect x="88" y="242.0" width="7" height="1" fill="#666"/><text transform="translate(81.2 175.4) rotate(-90)" x="0" y="0" font-family="Liberation Sans" font-size="8.6" fill="#222" text-anchor="middle">90</text><rect x="88" y="174.9" width="7" height="1" fill="#666"/><path d="M85 304 L85 315 L91.5 309.6 Z" fill="#222"/></svg>
<svg class="a" style="left:95px;top:155px" width="1043" height="577" viewBox="95 155 1043 577"><rect x="253.4" y="155" width="1.6" height="577" fill="#161616"/><rect x="924.8" y="155" width="1.6" height="577" fill="#161616"/><rect x="187" y="712" width="1" height="1" fill="#383838"/><rect x="187" y="645" width="1" height="1" fill="#383838"/><rect x="187" y="578" width="1" height="1" fill="#383838"/><rect x="187" y="510" width="1" height="1" fill="#383838"/><rect x="187" y="443" width="1" height="1" fill="#383838"/><rect x="187" y="376" width="1" height="1" fill="#383838"/><rect x="187" y="309" width="1" height="1" fill="#383838"/><rect x="187" y="242" width="1" height="1" fill="#383838"/><rect x="187" y="175" width="1" height="1" fill="#383838"/><rect x="254" y="712" width="1" height="1" fill="#383838"/><rect x="254" y="645" width="1" height="1" fill="#383838"/><rect x="254" y="578" width="1" height="1" fill="#383838"/><rect x="254" y="510" width="1" height="1" fill="#383838"/><rect x="254" y="443" width="1" height="1" fill="#383838"/><rect x="254" y="376" width="1" height="1" fill="#383838"/><rect x="254" y="309" width="1" height="1" fill="#383838"/><rect x="254" y="242" width="1" height="1" fill="#383838"/><rect x="254" y="175" width="1" height="1" fill="#383838"/><rect x="321" y="712" width="1" height="1" fill="#383838"/><rect x="321" y="645" width="1" height="1" fill="#383838"/><rect x="321" y="578" width="1" height="1" fill="#383838"/><rect x="321" y="510" width="1" height="1" fill="#383838"/><rect x="321" y="443" width="1" height="1" fill="#383838"/><rect x="321" y="376" width="1" height="1" fill="#383838"/><rect x="321" y="309" width="1" height="1" fill="#383838"/><rect x="321" y="242" width="1" height="1" fill="#383838"/><rect x="321" y="175" width="1" height="1" fill="#383838"/><rect x="388" y="712" width="1" height="1" fill="#383838"/><rect x="388" y="645" width="1" height="1" fill="#383838"/><rect x="388" y="578" width="1" height="1" fill="#383838"/><rect x="388" y="510" width="1" height="1" fill="#383838"/><rect x="388" y="443" width="1" height="1" fill="#383838"/><rect x="388" y="376" width="1" height="1" fill="#383838"/><rect x="388" y="309" width="1" height="1" fill="#383838"/><rect x="388" y="242" width="1" height="1" fill="#383838"/><rect x="388" y="175" width="1" height="1" fill="#383838"/><rect x="455" y="712" width="1" height="1" fill="#383838"/><rect x="455" y="645" width="1" height="1" fill="#383838"/><rect x="455" y="578" width="1" height="1" fill="#383838"/><rect x="455" y="510" width="1" height="1" fill="#383838"/><rect x="455" y="443" width="1" height="1" fill="#383838"/><rect x="455" y="376" width="1" height="1" fill="#383838"/><rect x="455" y="309" width="1" height="1" fill="#383838"/><rect x="455" y="242" width="1" height="1" fill="#383838"/><rect x="455" y="175" width="1" height="1" fill="#383838"/><rect x="522" y="712" width="1" height="1" fill="#383838"/><rect x="522" y="645" width="1" height="1" fill="#383838"/><rect x="522" y="578" width="1" height="1" fill="#383838"/><rect x="522" y="510" width="1" height="1" fill="#383838"/><rect x="522" y="443" width="1" height="1" fill="#383838"/><rect x="522" y="376" width="1" height="1" fill="#383838"/><rect x="522" y="309" width="1" height="1" fill="#383838"/><rect x="522" y="242" width="1" height="1" fill="#383838"/><rect x="522" y="175" width="1" height="1" fill="#383838"/><rect x="590" y="712" width="1" height="1" fill="#383838"/><rect x="590" y="645" width="1" height="1" fill="#383838"/><rect x="590" y="578" width="1" height="1" fill="#383838"/><rect x="590" y="510" width="1" height="1" fill="#383838"/><rect x="590" y="443" width="1" height="1" fill="#383838"/><rect x="590" y="376" width="1" height="1" fill="#383838"/><rect x="590" y="309" width="1" height="1" fill="#383838"/><rect x="590" y="242" width="1" height="1" fill="#383838"/><rect x="590" y="175" width="1" height="1" fill="#383838"/><rect x="657" y="712" width="1" height="1" fill="#383838"/><rect x="657" y="645" width="1" height="1" fill="#383838"/><rect x="657" y="578" width="1" height="1" fill="#383838"/><rect x="657" y="510" width="1" height="1" fill="#383838"/><rect x="657" y="443" width="1" height="1" fill="#383838"/><rect x="657" y="376" width="1" height="1" fill="#383838"/><rect x="657" y="309" width="1" height="1" fill="#383838"/><rect x="657" y="242" width="1" height="1" fill="#383838"/><rect x="657" y="175" width="1" height="1" fill="#383838"/><rect x="724" y="712" width="1" height="1" fill="#383838"/><rect x="724" y="645" width="1" height="1" fill="#383838"/><rect x="724" y="578" width="1" height="1" fill="#383838"/><rect x="724" y="510" width="1" height="1" fill="#383838"/><rect x="724" y="443" width="1" height="1" fill="#383838"/><rect x="724" y="376" width="1" height="1" fill="#383838"/><rect x="724" y="309" width="1" height="1" fill="#383838"/><rect x="724" y="242" width="1" height="1" fill="#383838"/><rect x="724" y="175" width="1" height="1" fill="#383838"/><rect x="791" y="712" width="1" height="1" fill="#383838"/><rect x="791" y="645" width="1" height="1" fill="#383838"/><rect x="791" y="578" width="1" height="1" fill="#383838"/><rect x="791" y="510" width="1" height="1" fill="#383838"/><rect x="791" y="443" width="1" height="1" fill="#383838"/><rect x="791" y="376" width="1" height="1" fill="#383838"/><rect x="791" y="309" width="1" height="1" fill="#383838"/><rect x="791" y="242" width="1" height="1" fill="#383838"/><rect x="791" y="175" width="1" height="1" fill="#383838"/><rect x="858" y="712" width="1" height="1" fill="#383838"/><rect x="858" y="645" width="1" height="1" fill="#383838"/><rect x="858" y="578" width="1" height="1" fill="#383838"/><rect x="858" y="510" width="1" height="1" fill="#383838"/><rect x="858" y="443" width="1" height="1" fill="#383838"/><rect x="858" y="376" width="1" height="1" fill="#383838"/><rect x="858" y="309" width="1" height="1" fill="#383838"/><rect x="858" y="242" width="1" height="1" fill="#383838"/><rect x="858" y="175" width="1" height="1" fill="#383838"/><rect x="925" y="712" width="1" height="1" fill="#383838"/><rect x="925" y="645" width="1" height="1" fill="#383838"/><rect x="925" y="578" width="1" height="1" fill="#383838"/><rect x="925" y="510" width="1" height="1" fill="#383838"/><rect x="925" y="443" width="1" height="1" fill="#383838"/><rect x="925" y="376" width="1" height="1" fill="#383838"/><rect x="925" y="309" width="1" height="1" fill="#383838"/><rect x="925" y="242" width="1" height="1" fill="#383838"/><rect x="925" y="175" width="1" height="1" fill="#383838"/><rect x="992" y="712" width="1" height="1" fill="#383838"/><rect x="992" y="645" width="1" height="1" fill="#383838"/><rect x="992" y="578" width="1" height="1" fill="#383838"/><rect x="992" y="510" width="1" height="1" fill="#383838"/><rect x="992" y="443" width="1" height="1" fill="#383838"/><rect x="992" y="376" width="1" height="1" fill="#383838"/><rect x="992" y="309" width="1" height="1" fill="#383838"/><rect x="992" y="242" width="1" height="1" fill="#383838"/><rect x="992" y="175" width="1" height="1" fill="#383838"/><rect x="1060" y="712" width="1" height="1" fill="#383838"/><rect x="1060" y="645" width="1" height="1" fill="#383838"/><rect x="1060" y="578" width="1" height="1" fill="#383838"/><rect x="1060" y="510" width="1" height="1" fill="#383838"/><rect x="1060" y="443" width="1" height="1" fill="#383838"/><rect x="1060" y="376" width="1" height="1" fill="#383838"/><rect x="1060" y="309" width="1" height="1" fill="#383838"/><rect x="1060" y="242" width="1" height="1" fill="#383838"/><rect x="1060" y="175" width="1" height="1" fill="#383838"/><rect x="1127" y="712" width="1" height="1" fill="#383838"/><rect x="1127" y="645" width="1" height="1" fill="#383838"/><rect x="1127" y="578" width="1" height="1" fill="#383838"/><rect x="1127" y="510" width="1" height="1" fill="#383838"/><rect x="1127" y="443" width="1" height="1" fill="#383838"/><rect x="1127" y="376" width="1" height="1" fill="#383838"/><rect x="1127" y="309" width="1" height="1" fill="#383838"/><rect x="1127" y="242" width="1" height="1" fill="#383838"/><rect x="1127" y="175" width="1" height="1" fill="#383838"/><rect x="321" y="256" width="591" height="187.7" rx="13" ry="13" fill="none" stroke="#fff" stroke-width="1.9"/><path d="M80 269.4 H253 V362.3 H80" fill="none" stroke="#6888c8" stroke-width="1.2" stroke-dasharray="7 2.5 1.5 2.5"/><path d="M108.3 272.7 H90 M108.3 346.7 H90" stroke="#fff" stroke-width="6.8" stroke-linecap="round" stroke-linejoin="round" fill="none"/><path d="M125.5 346.5 L150.5 275.5 Q152.6 271 154.7 275.5 L179.8 346.5 M134.2 323 H171" stroke="#fff" stroke-width="6.8" stroke-linecap="round" stroke-linejoin="round" fill="none"/><path d="M201.5 272.6 V346.8 H225 Q249.8 346.8 249.8 322 V297 Q249.8 272.6 225 272.6 Z" stroke="#fff" stroke-width="6.8" stroke-linecap="round" stroke-linejoin="round" fill="none"/><path d="M119.5 147 V732 M95 309.5 H1138" stroke="#7f5f00" stroke-width="1" stroke-dasharray="4 2"/><circle cx="119.5" cy="309.5" r="5" fill="none" stroke="#8a6800" stroke-width="1"/><circle cx="455.5" cy="578.3" r="4.8" fill="none" stroke="#a80000" stroke-width="1.1"/><path d="M450.7 578.3 H460.3 M455.5 573.5 V583.1" stroke="#a80000" stroke-width="1"/></svg><span class="a" style="left:127.8px;top:315px;font-size:13.5px;color:#ffc914;white-space:nowrap;will-change:transform;-webkit-text-stroke:.15px #ffc914;text-shadow:0 0 .7px #000">Griglia</span><!--/CANVAS-->

<div id="cmd" class="a"></div>
<div id="layer" class="a"></div>
<div id="rdock" class="a"></div>
<!--LAYER--><!-- layer panel -->
<div class="a" style="left:1153.5px;top:108px;width:1.5px;height:690px;background:#bdbdbd"></div>
<div class="a" style="left:1155px;top:108px;width:299px;height:23px;background:linear-gradient(#ececec,#e6e6e6 50%,#dadada)"></div>
<svg class="a" style="left:1155px;top:108px" width="40" height="22">
<circle cx="9" cy="10.2" r="6.8" fill="#6e6e6e"/><path d="M6.3 7.5 L11.7 12.9 M11.7 7.5 L6.3 12.9" stroke="#fff" stroke-width="1.6"/>
<circle cx="27" cy="10.2" r="6.8" fill="#6e6e6e"/><path d="M25.5 9.5 V7.5 H30.8 V11.8 H28.8" fill="none" stroke="#fff" stroke-width="1.1"/><rect x="23.2" y="10" width="5.6" height="4.4" fill="none" stroke="#fff" stroke-width="1.1"/>
</svg>
<span class="a" style="left:1280px;top:112px;font-size:12px;color:#2a2a2a;white-space:nowrap">Elenco dei livelli</span>
<div class="a" style="left:1155px;top:130px;width:299px;height:27px;background:#a8a8a8"></div>
<div class="lb" style="left:1155.5px;width:58.3px"></div>
<div class="lb" style="left:1215.3px;width:58.3px"></div>
<div class="lb" style="left:1275.1px;width:58.3px"></div>
<div class="lb" style="left:1334.9px;width:58.3px"></div>
<div class="lb" style="left:1394.7px;width:58.8px"></div>
<svg class="a" style="left:1155px;top:130px" width="300" height="26" viewBox="1155 130 300 26">
<defs><g id="eye"><path d="M-7.6 .3 Q-4.5 -5.6 0 -5.6 Q4.5 -5.6 7.6 .3 Q4.5 5.8 0 5.8 Q-4.5 5.8 -7.6 .3 Z" fill="#000"/><path d="M-5 .9 Q-2.6 -2.6 0 -2.6 Q2.6 -2.6 5 .9 Q2.6 3.9 0 3.9 Q-2.6 3.9 -5 .9 Z" fill="#fff"/><path d="M-2.6 -1.3 Q0 -2.5 2.6 -1.3 L2.6 1 Q2 3.2 0 3.2 Q-2 3.2 -2.6 1 Z" fill="#000"/><path d="M-.6 -1.2 L.2 .6 L.9 -1.4" stroke="#fff" stroke-width=".5" fill="none"/></g></defs>
<use href="#eye" x="1185" y="143"/>
<g opacity=".35"><use href="#eye" x="1244.5" y="143"/></g>
<path d="M1304.5 137.5 V148.5 M1299 143 H1310" stroke="#e00000" stroke-width="2.8"/>
<path d="M1358.5 143 H1370.5" stroke="#e00000" stroke-width="2.6"/>
<path d="M1418 149.5 L1419 146 L1429.2 135.8 Q1430.5 135 1431.2 135.9 Q1431.8 136.8 1431 138 L1421 148.3 Z" fill="#e8b040" stroke="#9a6a10" stroke-width=".7"/><path d="M1428.5 136.5 L1430.5 138.5" stroke="#e03030" stroke-width="1.8"/>
</svg>
<div class="a" style="left:1155px;top:157px;width:299px;height:640px;background:#fff"></div><div class="a" style="left:1155px;top:797px;width:299px;height:1px;background:#c9c9c9"></div>
<svg class="a" style="left:1155px;top:156px" width="299" height="80" viewBox="1155 156 299 80">
<rect x="1161.5" y="163.3" width="15.5" height="8.3" fill="#fff" stroke="#000" stroke-width="1"/>
<rect x="1161" y="183" width="16" height="8.5" fill="#f00" stroke="#000" stroke-width=".6"/>
<rect x="1161" y="203" width="16" height="8.5" fill="#000"/>
<rect x="1161" y="223" width="16" height="8.5" fill="#000"/>
<use href="#eye" x="1423" y="167"/><use href="#eye" x="1423" y="187"/><use href="#eye" x="1423" y="207"/><use href="#eye" x="1423" y="227"/>
<g fill="#c4c4c4"><path d="M1440 166.5 h10 v7.5 h-10 Z M1441.5 166.5 v-2.5 a3.5 3.5 0 0 1 7 0 v2.5 h-1.6 v-2.5 a1.9 1.9 0 0 0 -3.8 0 v2.5 Z"/>
<path d="M1440 186.5 h10 v7.5 h-10 Z M1441.5 186.5 v-2.5 a3.5 3.5 0 0 1 7 0 v2.5 h-1.6 v-2.5 a1.9 1.9 0 0 0 -3.8 0 v2.5 Z"/>
<path d="M1440 206.5 h10 v7.5 h-10 Z M1441.5 206.5 v-2.5 a3.5 3.5 0 0 1 7 0 v2.5 h-1.6 v-2.5 a1.9 1.9 0 0 0 -3.8 0 v2.5 Z"/>
<path d="M1440 226.5 h10 v7.5 h-10 Z M1441.5 226.5 v-2.5 a3.5 3.5 0 0 1 7 0 v2.5 h-1.6 v-2.5 a1.9 1.9 0 0 0 -3.8 0 v2.5 Z"/></g>
<path d="M1394.5 233.5 L1395.5 230 L1405 220.5 Q1406.3 219.7 1407 220.6 Q1407.6 221.5 1406.8 222.7 L1397.5 232.3 Z" fill="#e8b040" stroke="#9a6a10" stroke-width=".7"/><path d="M1404.5 221.2 L1406.5 223.2" stroke="#e03030" stroke-width="1.8"/>
</svg>
<span class="ln" style="top:159px">0</span>
<span class="ln" style="top:179px">Centro</span>
<span class="ln" style="top:199px">Invisibile</span>
<span class="ln" style="top:219px">Visibile</span>
<!-- right dock -->
<div class="hdl2" style="left:1462px;top:116px;width:26px;height:2px"></div>
<div class="a" style="left:1456.3px;top:120.2px;width:43px;height:42.5px;background:#b9b9b9;border-radius:8px"></div>
<div class="dsep2" style="left:1457px;top:261px;width:40px"></div>
<div class="dsep2" style="left:1457px;top:409px;width:40px"></div>
<div class="a" style="left:1456.3px;top:417px;width:43px;height:42.5px;background:#b9b9b9;border-radius:8px"></div>
<svg class="a" style="left:1454px;top:108px" width="46" height="400" viewBox="1454 108 46 400">
<defs><g id="win"><rect x=".5" y=".5" width="27" height="26.5" fill="#fff" stroke="#111" stroke-width="1"/><rect x=".5" y=".5" width="27" height="4.3" fill="#111"/><rect x="1.6" y="1.3" width="2.8" height="2.8" fill="#fff"/></g></defs>
<g transform="translate(1463,127.5)"><use href="#win"/><path d="M8 18 L8 10 L16 7 L16 15 Z" fill="#999" stroke="#444" stroke-width=".6"/><path d="M11 19 L11 11 L21 8 L21 16 Z" fill="#fff" stroke="#555" stroke-width=".6"/><path d="M15 16 L18 10 L18 15 Z" fill="none" stroke="#e04040" stroke-width=".6"/></g>
<g transform="translate(1463,174.3)"><use href="#win"/><rect x="5.5" y="9.5" width="10" height="8" fill="#f4eac8" stroke="#555" stroke-width=".6"/><circle cx="17" cy="17" r="4.3" fill="#f4eac8" stroke="#555" stroke-width=".6"/></g>
<g transform="translate(1463,220.5)"><use href="#win"/><rect x="5" y="10" width="18" height="12" rx="2" fill="#f4f4f4" stroke="#b8c8e0" stroke-width=".8"/></g>
<g transform="translate(1463,276)"><use href="#win"/><g fill="#111"><rect x="4" y="9" width="3.5" height="2.5"/><rect x="4" y="15" width="3.5" height="2.5"/><rect x="4" y="21" width="3.5" height="2.5"/></g><g fill="none" stroke="#333" stroke-width=".6"><rect x="10" y="9" width="14" height="2.6"/><rect x="10" y="15" width="14" height="2.6"/><rect x="10" y="21" width="14" height="2.6"/></g></g>
<g transform="translate(1463,322.2)"><use href="#win"/><path d="M7 10 Q14 8 21 10 L15.5 15 V24 L12.5 22 V15 Z" fill="#bbb" stroke="#444" stroke-width=".7"/><ellipse cx="14" cy="10" rx="7" ry="1.6" fill="#777"/></g>
<g transform="translate(1463,367.8)"><use href="#win"/><path d="M5.5 9 L12 14 V20 L5.5 25 Z" fill="#fff" stroke="#444" stroke-width=".7"/><rect x="12" y="13" width="10" height="8" rx="2" fill="#888"/><path d="M3 17 H25" stroke="#f08080" stroke-width=".6" stroke-dasharray="1.5 1"/></g>
<g transform="translate(1463,423.8)"><use href="#win"/><g stroke="#aaa" stroke-width=".8"><path d="M4 9 h9 M4 12.5 h8 M4 16 h10 M4 19.5 h9"/></g><path d="M.5 23 H27.5" stroke="#333" stroke-width=".6"/><text x="8" y="26.6" font-family="Liberation Sans" font-size="3.2" fill="#333">command</text></g>
<g transform="translate(1463,471)"><use href="#win"/><rect x="8" y="9" width="12" height="15" fill="#c8821e"/><rect x="9.3" y="10.5" width="9.4" height="12" fill="#f6f6f6"/><rect x="11" y="7.8" width="6" height="3" fill="#999"/></g>
</svg>
<!--/LAYER-->

<div id="status" class="a"></div>
<!--REST--><!-- tab header -->
<svg class="a" style="left:72px;top:108px" width="60" height="24" viewBox="72 108 60 24">
<path d="M79 116.3 L87 124.3 M87 116.3 L79 124.3" stroke="#555" stroke-width="1"/>
<circle cx="102" cy="118.7" r="5.4" fill="#f4f4f6" stroke="#233f8a" stroke-width="2.1"/>
<path d="M100 116 v5 M98 118.5 h5" stroke="#c8c8d0" stroke-width=".6"/><path d="M102.3 118.8 L106.3 123" stroke="#f0a820" stroke-width="2.2" stroke-linecap="round"/><circle cx="107.3" cy="124" r="1.2" fill="#e06a6a"/>
</svg>
<span class="a" style="left:578px;top:113.2px;font-size:12px;color:#1a1a1a;white-space:nowrap">* middle_manual.dxf</span>
<!-- scrollbars -->
<div class="a" style="left:221px;top:736.8px;width:736px;height:8.4px;border-radius:4.2px;background:#7f7f7f"></div>
<div class="a" style="left:1142.8px;top:331.5px;width:8.4px;height:332px;border-radius:4.2px;background:#7f7f7f"></div>
<div class="a" style="left:1083.3px;top:732px;width:71px;height:16px;background:#ececec"></div>
<span class="a" style="left:1103px;top:732.5px;font-size:13px;color:#111;white-space:nowrap">10 &lt; 100</span>
<!-- command -->
<div class="a" style="left:72px;top:748px;width:1083px;height:2px;background:#c9c9c9"></div>
<div class="a" style="left:72.5px;top:750px;width:1081px;height:21px;background:#fff;border-bottom:1px solid #bdbdbd"></div>
<span class="a" style="left:77.5px;top:751px;font-size:13px;color:#1a1ad0;white-space:nowrap"><i>Comando:</i> paste</span>
<span class="a" style="left:73px;top:778px;font-size:13.3px;color:#111;white-space:nowrap">Posizione:</span>
<div class="a" style="left:138px;top:775.5px;width:989px;height:19px;background:#fff"></div>
<div class="a" style="left:1127.5px;top:772.5px;width:25px;height:25px;background:linear-gradient(#f4f4f4,#e8e8e8);border:1px solid #b8b8b8"></div>
<svg class="a" style="left:1130px;top:776px" width="20" height="18"><rect x="3.5" y="4.5" width="13.3" height="9.3" fill="#f0f0f0" stroke="#333" stroke-width=".9"/><rect x="3" y="4" width="14.3" height="3" fill="#111"/><rect x="13.5" y="4.8" width="1.2" height="1.2" fill="#ddd"/></svg>
<!-- status bar -->
<span class="st" style="left:2px;top:807px">80,70</span>
<span class="st" style="left:2px;top:827px">@-50,40</span>
<div class="a" style="left:253.5px;top:802px;width:1px;height:40px;background:#9a9a9a"></div>
<span class="st" style="left:256px;top:807px">106.3015&lt;41°</span>
<span class="st" style="left:256px;top:827px">@64.0312&lt;141°</span>
<div class="a" style="left:506px;top:819px;width:6px;height:6px;border-radius:3px;background:#c4c4c4"></div>
<span class="st" style="left:655.7px;top:817px">Posizione</span>
<svg class="a" style="left:715px;top:804px" width="22" height="34"><rect x="2.5" y="2.3" width="17.5" height="29.3" rx="8.75" ry="9.5" fill="#fff" stroke="#555" stroke-width=".9"/><path d="M2.8 14 Q11.25 11.5 19.8 14" stroke="#555" stroke-width="1" fill="none"/><rect x="9.6" y="4" width="3.2" height="7" rx="1.6" fill="#fff" stroke="#555" stroke-width=".8"/><path d="M11.25 2.5 V4 M11.25 11 V13" stroke="#555" stroke-width=".8"/></svg>
<span class="st" style="left:754.4px;top:817px">Annulla</span>
<div class="a" style="left:940.3px;top:819px;width:6px;height:6px;border-radius:3px;background:#c4c4c4"></div>
<span class="st" style="left:949.3px;top:817px">Nessun entità selezionate.</span>
<div class="a" style="left:1269.5px;top:819px;width:6px;height:6px;border-radius:3px;background:#c4c4c4"></div>
<!--/REST-->
<!--OVER--><!-- highlight overlay -->
<svg class="a" style="left:0;top:280px" width="120" height="110" viewBox="0 280 120 110">
<defs>
<radialGradient id="ring" cx="61" cy="336" r="40" gradientUnits="userSpaceOnUse">
<stop offset="0" stop-color="#ffffff" stop-opacity=".12"/>
<stop offset=".76" stop-color="#f4f6f8" stop-opacity=".2"/>
<stop offset=".82" stop-color="#c9d3dc" stop-opacity=".55"/>
<stop offset=".9" stop-color="#9fb1c2" stop-opacity=".85"/>
<stop offset=".96" stop-color="#a6b6c5" stop-opacity=".75"/>
<stop offset="1" stop-color="#b0bfcc" stop-opacity="0"/>
</radialGradient>
<linearGradient id="hfade" x1="0" y1="0" x2="1" y2="0"><stop offset="0" stop-color="#e05050" stop-opacity="0"/><stop offset=".18" stop-color="#d84a4a" stop-opacity=".9"/><stop offset=".82" stop-color="#d84a4a" stop-opacity=".9"/><stop offset="1" stop-color="#e05050" stop-opacity="0"/></linearGradient>
<linearGradient id="vfade" x1="0" y1="0" x2="0" y2="1"><stop offset="0" stop-color="#e05050" stop-opacity="0"/><stop offset=".18" stop-color="#d84a4a" stop-opacity=".9"/><stop offset=".82" stop-color="#d84a4a" stop-opacity=".9"/><stop offset="1" stop-color="#e05050" stop-opacity="0"/></linearGradient>
</defs>
<circle cx="61" cy="336" r="40" fill="url(#ring)"/>
<rect x="36" y="312.3" width="35" height="34.5" fill="#f4c6c6"/>
<rect x="27" y="311.7" width="50" height="1.3" fill="url(#hfade)"/>
<rect x="27" y="346.2" width="50" height="1.3" fill="url(#hfade)"/>
<rect x="35.4" y="304" width="1.3" height="51" fill="url(#vfade)"/>
<rect x="70.3" y="304" width="1.3" height="51" fill="url(#vfade)"/>
<rect x="41.5" y="319.6" width="23" height="18.7" fill="none" stroke="#4e3232" stroke-width="1.4"/>
<path d="M44.5 335.8 L62.5 321" stroke="#8a6a6a" stroke-width=".8" stroke-dasharray="2 1.5"/>
<circle cx="53" cy="328.8" r="1.9" fill="#f00"/>
<path d="M61.2 336.4 L61.2 358.2 L66.3 353.6 L69.8 361.8 L73.4 360.3 L69.9 352.3 L76.6 352.3 Z" fill="#fff" stroke="#111" stroke-width="1.2" stroke-linejoin="round"/>
</svg>
<div class="a" style="left:47.5px;top:364px;width:136px;height:24.6px;border-radius:3.5px;background:linear-gradient(#f6f7f9,#eceff3 50%,#dfe4ea);box-shadow:0 .5px 1.5px rgba(0,0,0,.25)"></div>
<span class="a" style="left:53px;top:369px;font-size:14.1px;color:#000;white-space:nowrap">Medio manualmente</span>
<!--/OVER-->
</body></html>
